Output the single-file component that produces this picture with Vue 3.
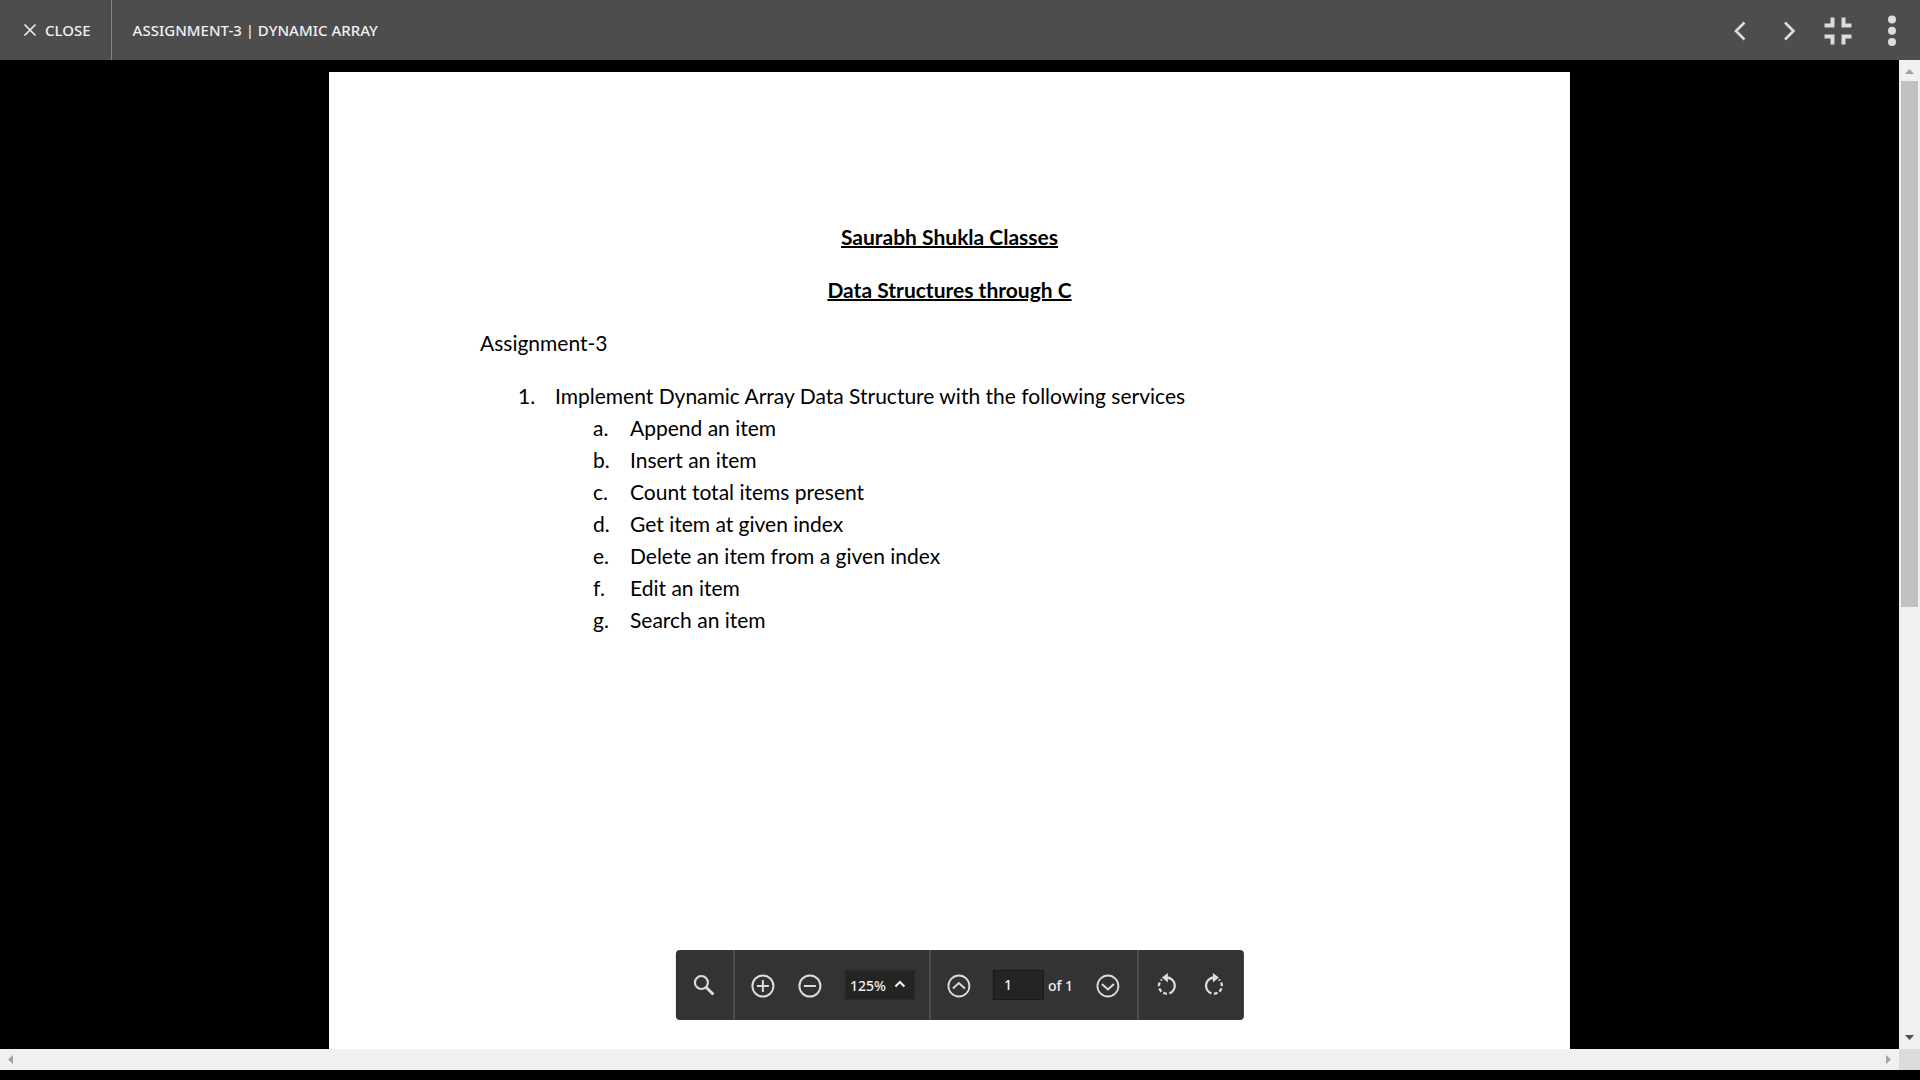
<script setup>
import { ref } from 'vue'

const zoom = ref('125%')
const page = ref('1')
const services = [
  ['a.', 'Append an item'],
  ['b.', 'Insert an item'],
  ['c.', 'Count total items present'],
  ['d.', 'Get item at given index'],
  ['e.', 'Delete an item from a given index'],
  ['f.', 'Edit an item'],
  ['g.', 'Search an item'],
]
</script>

<template>
  <div class="app">
    <header class="topbar">
      <button class="close" type="button">
        <svg width="14" height="14" viewBox="0 0 14 14" aria-hidden="true">
          <path d="M1.5 1.5l11 11M12.5 1.5l-11 11" fill="none" stroke="#f0f0f0" stroke-width="1.6" />
        </svg>
        <span>CLOSE</span>
      </button>
      <h1 class="title">ASSIGNMENT-3 | DYNAMIC ARRAY</h1>
      <nav class="actions">
        <button type="button" aria-label="Previous">
          <svg width="28" height="28" viewBox="0 0 28 28"><path d="M18.500 5.500L10 14l8.500 8.500" fill="none" stroke="#dcdcdc" stroke-width="2.600" /></svg>
        </button>
        <button type="button" aria-label="Next">
          <svg width="28" height="28" viewBox="0 0 28 28"><path d="M10 5.500L18.500 14l-8.500 8.500" fill="none" stroke="#dcdcdc" stroke-width="2.600" /></svg>
        </button>
        <button type="button" aria-label="Exit full screen">
          <svg width="28" height="28" viewBox="0 0 28 28"><path d="M6.500 0.500h4v10h-10v-4h6zM17.500 0.500h4v6h6v4h-10zM0.500 17.500h10v10h-4v-6h-6zM17.500 17.500h10v4h-6v6h-4z" fill="#dcdcdc" /></svg>
        </button>
        <button class="more" type="button" aria-label="More options">
          <svg width="28" height="32" viewBox="0 0 28 32"><g fill="#dcdcdc"><circle cx="14" cy="4.500" r="4" /><circle cx="14" cy="15.700" r="4" /><circle cx="14" cy="27" r="4" /></g></svg>
        </button>
      </nav>
    </header>

    <main class="viewer">
      <div class="canvas">
        <article class="sheet">
          <h2>Saurabh Shukla Classes</h2>
          <h2>Data Structures through C</h2>
          <p>Assignment-3</p>
          <ol class="tasks">
            <li>
              <div class="entry"><span class="mark">1.</span>Implement Dynamic Array Data Structure with the following services</div>
              <ol class="services">
                <li v-for="[mark, text] in services" :key="mark" class="entry"><span class="mark">{{ mark }}</span>{{ text }}</li>
              </ol>
            </li>
          </ol>
        </article>
      </div>
      <div class="vbar">
        <svg width="21" height="21" viewBox="0 0 21 21"><path d="M6 14l4.500-5 4.500 5z" fill="#a3a3a3" /></svg>
        <div class="track"><div class="thumb"></div></div>
        <svg width="21" height="21" viewBox="0 0 21 21"><path d="M6 7h9l-4.500 5z" fill="#505050" /></svg>
      </div>
      <div class="hbar">
        <svg width="21" height="21" viewBox="0 0 21 21"><path d="M13 6v9l-5-4.500z" fill="#a3a3a3" /></svg>
        <svg width="21" height="21" viewBox="0 0 21 21"><path d="M8 6v9l5-4.500z" fill="#a3a3a3" /></svg>
      </div>
      <div class="corner"></div>
    </main>

    <div class="toolbar" role="toolbar" aria-label="Document controls">
      <div class="group">
        <button type="button" aria-label="Search">
          <svg width="24" height="24" viewBox="0 0 24 24"><g fill="none" stroke="#dcdcdc"><circle cx="9.500" cy="8.500" r="6.500" stroke-width="2.200" /><path d="M14 13l7.500 7.500" stroke-width="3" /></g></svg>
        </button>
      </div>
      <div class="group zooming">
        <button type="button" aria-label="Zoom in">
          <svg width="24" height="24" viewBox="0 0 24 24"><g fill="none" stroke="#dcdcdc" stroke-width="2"><circle cx="12" cy="12" r="10.500" /><path d="M6 12h12M12 6v12" /></g></svg>
        </button>
        <button type="button" aria-label="Zoom out">
          <svg width="24" height="24" viewBox="0 0 24 24"><g fill="none" stroke="#dcdcdc" stroke-width="2"><circle cx="12" cy="12" r="10.500" /><path d="M6 12h12" /></g></svg>
        </button>
        <div class="zoom">
          <select v-model="zoom" aria-label="Zoom level">
            <option>75%</option>
            <option>100%</option>
            <option>125%</option>
            <option>150%</option>
          </select>
          <svg width="12" height="8" viewBox="0 0 12 8"><path d="M1.500 6.500L6 2l4.500 4.500" fill="none" stroke="#f0f0f0" stroke-width="2" /></svg>
        </div>
      </div>
      <div class="group paging">
        <button type="button" aria-label="Previous page">
          <svg width="24" height="24" viewBox="0 0 24 24"><g fill="none" stroke="#dcdcdc"><circle cx="12" cy="12" r="10.500" stroke-width="1.800" /><path d="M6 14.500l6-5.500 6 5.500" stroke-width="2" /></g></svg>
        </button>
        <label class="pages">
          <input v-model="page" type="text" aria-label="Page number" />
          <span>of 1</span>
        </label>
        <button type="button" aria-label="Next page">
          <svg width="24" height="24" viewBox="0 0 24 24"><g fill="none" stroke="#dcdcdc"><circle cx="12" cy="12" r="10.500" stroke-width="1.800" /><path d="M6 10l6 5.500 6-5.500" stroke-width="2" /></g></svg>
        </button>
      </div>
      <div class="group rotating">
        <button type="button" aria-label="Rotate left">
          <svg width="24" height="24" viewBox="0 0 24 24"><g fill="none" stroke="#dcdcdc" stroke-width="2.300"><path d="M11.500 3.500a8.200 8.200 0 0 1 3 15.900" /><path d="M12 19.800a8.200 8.200 0 0 1-8-8a8.200 8.200 0 0 1 3-6.200" stroke-dasharray="3.800 2.200" /></g><path d="M13 -1v9.500L7 3.500z" fill="#dcdcdc" /></svg>
        </button>
        <button type="button" aria-label="Rotate right">
          <svg width="24" height="24" viewBox="0 0 24 24"><g transform="translate(24 0) scale(-1 1)"><g fill="none" stroke="#dcdcdc" stroke-width="2.300"><path d="M11.500 3.500a8.200 8.200 0 0 1 3 15.900" /><path d="M12 19.800a8.200 8.200 0 0 1-8-8a8.200 8.200 0 0 1 3-6.200" stroke-dasharray="3.800 2.200" /></g><path d="M13 -1v9.500L7 3.500z" fill="#dcdcdc" /></g></svg>
        </button>
      </div>
    </div>
  </div>
</template>

<style>
body {
  margin: 0;
  background: #000;
}
</style>

<style scoped>
.app {
  position: relative;
  display: flex;
  flex-direction: column;
  box-sizing: border-box;
  height: 100vh;
  padding-bottom: 10px;
  background: #000;
  color: #f0f0f0;
  font-family: "Noto Sans", sans-serif;
  font-size: 15px;
  font-weight: 500;
}
svg {
  display: block;
  overflow: visible;
}
button {
  padding: 0;
  border: 0;
  background: none;
  color: inherit;
  font: inherit;
}
.topbar {
  display: flex;
  align-items: center;
  flex: none;
  height: 60px;
  background: #4d4d4d;
}
.close {
  display: flex;
  align-items: center;
  gap: 8px;
  height: 60px;
  padding: 0 20px 0 23px;
  border-right: 1px solid #858585;
}
.title {
  flex: 1;
  margin: 0 21px;
  font-size: 15px;
  font-weight: 500;
}
.actions {
  display: flex;
  align-items: center;
  gap: 21px;
  padding: 2px 14px 0 0;
}
.more {
  margin-left: 5px;
}
.viewer {
  display: grid;
  grid-template-columns: 1fr 21px;
  grid-template-rows: 1fr 21px;
  flex: 1;
  min-height: 0;
}
.canvas {
  display: flex;
  justify-content: center;
  min-height: 0;
  padding-top: 12px;
  overflow: hidden;
}
.sheet {
  box-sizing: border-box;
  width: 1241px;
  height: 1754px;
  padding: 149px 151px;
  background: #fff;
  color: #000;
  font-family: Lato, sans-serif;
  font-size: 21px;
  font-weight: 400;
  line-height: 32px;
}
.sheet h2 {
  margin: 0 0 21px;
  font-size: 21px;
  text-align: center;
  text-decoration: underline;
  text-decoration-thickness: 2px;
}
.sheet p {
  margin: 0 0 21px;
}
.sheet ol {
  margin: 0;
  list-style: none;
}
.tasks {
  padding-left: 38px;
}
.services {
  padding-left: 75px;
}
.entry {
  display: flex;
}
.mark {
  flex: none;
  width: 37px;
}
.vbar,
.hbar {
  display: flex;
  justify-content: space-between;
  background: #f0f0f0;
}
.vbar {
  flex-direction: column;
}
.track {
  display: grid;
  grid-template-rows: 5fr 4fr;
  flex: 1;
  padding: 0 2px;
}
.thumb {
  background: #c1c1c1;
}
.corner {
  background: #dcdcdc;
}
.toolbar {
  position: absolute;
  bottom: 60px;
  left: 50%;
  display: flex;
  height: 70px;
  border-radius: 4px;
  background: #333;
  font-size: 14px;
  transform: translateX(-50%);
}
.toolbar button {
  padding-top: 2px;
}
.group {
  display: flex;
  align-items: center;
  padding: 0 17px 0 16px;
}
.group + .group {
  border-left: 2px solid #4d4d4d;
}
.zooming,
.rotating {
  gap: 23px;
}
.group.zooming {
  padding-right: 14px;
}
.group.rotating {
  padding-right: 18px;
}
.zoom {
  position: relative;
}
.zoom select {
  display: block;
  box-sizing: border-box;
  width: 70px;
  height: 30px;
  padding: 0 0 0 4px;
  border: 1px solid #2b2b2b;
  background: #242424;
  color: #f0f0f0;
  font: inherit;
  appearance: none;
}
.zoom svg {
  position: absolute;
  top: 10px;
  right: 9px;
  pointer-events: none;
}
.paging {
  gap: 22px;
}
.pages {
  display: flex;
  align-items: center;
  gap: 4px;
  padding-right: 1px;
}
.pages input {
  box-sizing: border-box;
  width: 51px;
  height: 30px;
  padding: 0 10px 2px;
  border: 1px solid #1a1a1a;
  background: #242424;
  color: #f0f0f0;
  font: inherit;
}
</style>
